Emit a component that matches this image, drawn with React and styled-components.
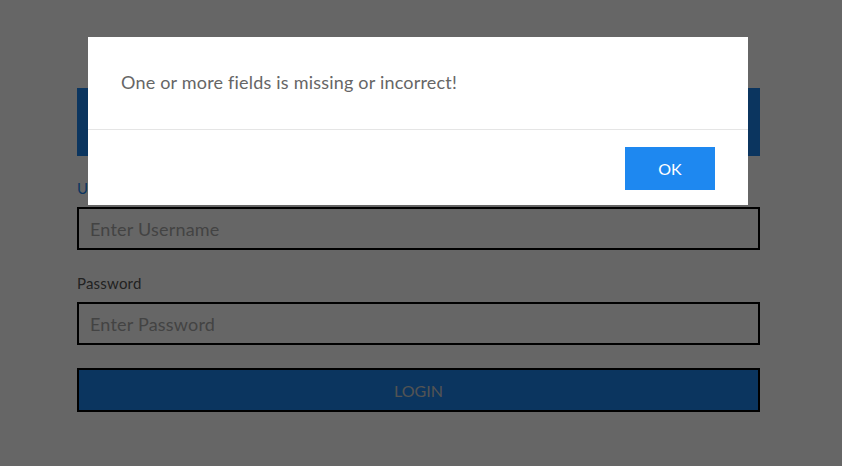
import React from 'react'
import styled, { createGlobalStyle } from 'styled-components'

const GlobalStyle = createGlobalStyle`
    html, body {
        margin: 0;
        padding: 0;
        background: #ffffff;
        font-family: 'Lato', 'Noto Sans', sans-serif;
    }
`

const Page = styled.div`
    width: 683px;
    margin-left: 77px;
    padding-top: 88px;
    display: flex;
    flex-direction: column;
`

const Header = styled.div`
    height: 68px;
    background: #1c86ee;
    margin-bottom: 24px;
`

const Form = styled.form`
    display: flex;
    flex-direction: column;
`

const Label = styled.label`
    font-size: 15px;
    line-height: 16px;
    letter-spacing: 0.2px;
    color: ${pr => pr.active ? '#1c86ee' : '#555555'};
    margin-bottom: 11px;
`

const Input = styled.input`
    box-sizing: border-box;
    height: 43px;
    border: 2px solid #000;
    padding: 0 11px;
    font-family: inherit;
    font-size: 18px;
    letter-spacing: 0.2px;
    color: #333;
    background: #fff;
    margin-bottom: 25px;
    outline: none;

    &::placeholder {
        color: #a8a8a8;
    }
`

const LoginButton = styled.button`
    box-sizing: border-box;
    height: 44px;
    margin-top: -2px;
    border: 2px solid #000;
    background: #1c86ee;
    color: #d0d0d0;
    font-family: inherit;
    font-size: 16px;
`

const Overlay = styled.div`
    position: fixed;
    inset: 0;
    background: rgba(0, 0, 0, 0.6);
    display: flex;
    justify-content: flex-start;
    align-items: flex-start;
`

const Modal = styled.div`
    width: 660px;
    margin-left: 88px;
    margin-top: 37px;
    background: #fff;
    display: flex;
    flex-direction: column;
`

const ModalBody = styled.div`
    height: 93px;
    box-sizing: border-box;
    padding: 34px 33px 0;
    border-bottom: 1px solid #e5e5e5;
    font-size: 18px;
    line-height: 22px;
    letter-spacing: 0.2px;
    color: #666666;
`

const ModalFooter = styled.div`
    height: 75px;
    box-sizing: border-box;
    padding: 17px 33px 0;
    display: flex;
    justify-content: flex-end;
    align-items: flex-start;
`

const OkButton = styled.button`
    width: 90px;
    height: 43px;
    border: none;
    background: #1e88f0;
    color: #fff;
    font-family: inherit;
    font-size: 16px;
`

export default function App() {
    return (
        <>
            <GlobalStyle />
            <Page>
                <Header />
                <Form onSubmit={e => e.preventDefault()}>
                    <Label active>Username</Label>
                    <Input placeholder='Enter Username' />
                    <Label>Password</Label>
                    <Input type='password' placeholder='Enter Password' />
                    <LoginButton>LOGIN</LoginButton>
                </Form>
            </Page>
            <Overlay>
                <Modal>
                    <ModalBody>One or more fields is missing or incorrect!</ModalBody>
                    <ModalFooter>
                        <OkButton>OK</OkButton>
                    </ModalFooter>
                </Modal>
            </Overlay>
        </>
    )
}
